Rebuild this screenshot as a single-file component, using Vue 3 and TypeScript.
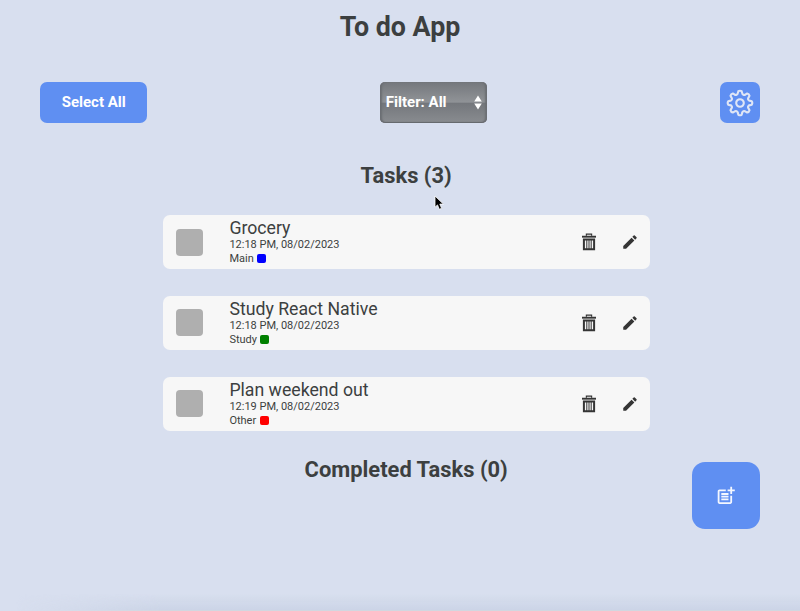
<script setup lang="ts">
interface Task {
  title: string
  date: string
  category: string
  color: string
}

const tasks: Task[] = [
  { title: 'Grocery', date: '12:18 PM, 08/02/2023', category: 'Main', color: '#0000ff' },
  { title: 'Study React Native', date: '12:18 PM, 08/02/2023', category: 'Study', color: '#008000' },
  { title: 'Plan weekend out', date: '12:19 PM, 08/02/2023', category: 'Other', color: '#ff0000' },
]

// Eight rounded teeth joined by scooped valleys
function point(radius: number, degrees: number): string {
  const rad = (degrees * Math.PI) / 180
  return `${(radius * Math.cos(rad)).toFixed(2)} ${(radius * Math.sin(rad)).toFixed(2)}`
}

function gearOutline(): string {
  let d = `M${point(11.9, -8)}`
  for (let i = 0; i < 8; i++) {
    const a = i * 45
    d += `Q${point(12.8, a)} ${point(11.9, a + 8)}`
    d += `L${point(10.3, a + 12)}`
    d += `C${point(8.5, a + 16)} ${point(8.5, a + 29)} ${point(10.3, a + 33)}`
    d += `L${point(11.9, a + 37)}`
  }
  return d + 'Z'
}

const gear = gearOutline()
</script>

<template>
  <main class="app">
    <h1 class="title">To do App</h1>
    <div class="toolbar">
      <button class="btn select-all">Select All</button>
      <button class="btn filter">
        <span>Filter: All</span>
        <svg class="arrows" width="8" height="15" viewBox="0 0 8 15"><path d="M4 .5 7.8 6.5H.2zM4 14.5.2 8.5h7.6z" fill="#fff" /></svg>
      </button>
      <button class="btn settings" aria-label="Settings">
        <svg width="28" height="28" viewBox="-14 -14 28 28" fill="none" stroke="#dfe6f6" stroke-width="2.1" stroke-linejoin="round">
          <path :d="gear" />
          <circle r="3.8" />
        </svg>
      </button>
    </div>

    <div class="lists">
      <h2 class="heading">Tasks (3)</h2>
      <ul class="tasks">
        <li v-for="task in tasks" :key="task.title" class="task">
          <span class="checkbox"></span>
          <div class="info">
            <div class="name">{{ task.title }}</div>
            <div class="date">{{ task.date }}</div>
            <div class="category">
              <span>{{ task.category }}</span>
              <i class="swatch" :style="{ background: task.color }"></i>
            </div>
          </div>
          <svg class="trash" width="16" height="18" viewBox="0 0 16 18" fill="none" stroke="#353535">
            <path d="M5.4 2.8V1.2h5.2v1.6" stroke-width="1.2" />
            <path d="M1 3.7h14" stroke-width="1.9" />
            <path d="M2.9 6.6h10.2v9.6H2.9z" stroke-width="2" />
            <path d="M5.8 6.5v10M8 6.5v10M10.2 6.5v10" stroke-width="1" />
          </svg>
          <svg class="pencil" width="18" height="18" viewBox="0 0 24 24" fill="#353535">
            <path d="M3 17.25V21h3.75L17.81 9.94l-3.75-3.75zM20.71 7.04a1 1 0 0 0 0-1.41l-2.34-2.34a1 1 0 0 0-1.41 0l-1.83 1.83 3.75 3.75z" />
          </svg>
        </li>
      </ul>
      <h2 class="heading completed">Completed Tasks (0)</h2>
    </div>

    <button class="btn add" aria-label="Add task">
      <svg width="21.6" height="21.6" viewBox="0 0 24 24" fill="#f4f7ff">
        <path d="M17 19.22H5V7h7V5H5c-1.1 0-2 .9-2 2v12c0 1.1.9 2 2 2h12c1.1 0 2-.9 2-2v-7h-2zM19 2h-2v3h-3v2h3v3h2V7h3V5h-3zM7 9h8v2H7zM7 12v2h8v-2zM7 15h8v2H7z" />
      </svg>
    </button>
    <svg class="cursor" width="11" height="16" viewBox="0 0 11 16">
      <path d="M1 1v11.2l2.5-2.3 1.8 4.4 2.3-1-1.8-4.2h3.6z" fill="#000" stroke="#fff" stroke-width=".8" />
    </svg>
    <div class="bottom-shade"></div>
  </main>
</template>

<style>
body {
  background: #d8dfef;
}
</style>

<style scoped>
.app {
  position: relative;
  box-sizing: border-box;
  height: 611px;
  overflow: hidden;
  background: #d8dfef;
  color: #3c3f40;
  font-family: Roboto, "Liberation Sans", sans-serif;
}
.title {
  margin: 0;
  padding-top: 11px;
  font-size: 26.8px;
  line-height: 32px;
  text-align: center;
}
.toolbar {
  display: flex;
  padding: 39.3px 40px 0;
}
.btn {
  display: flex;
  align-items: center;
  justify-content: center;
  box-sizing: border-box;
  height: 40.5px;
  padding: 0;
  border: 0;
  border-radius: 7px;
  background: #5f8ff2;
  color: #fff;
  font: 700 15px/20px Roboto, "Liberation Sans", sans-serif;
}
.select-all {
  width: 107.4px;
  margin-right: 232.4px;
  padding-bottom: 1px;
}
.filter {
  justify-content: space-between;
  width: 107.6px;
  padding: 0 5px 1px 6px;
  border-radius: 5px;
  background: linear-gradient(#74777c, #909397 49%, #74777c 52%, #898c90);
  box-shadow: inset 3px 0 2px -1px #6b6e73, inset -3px 0 2px -1px #6b6e73, inset 0 -1px 1px #65676b;
}
.arrows {
  display: block;
}
.settings {
  width: 40.5px;
  margin-left: auto;
}
.lists {
  width: 487px;
  margin: 37.4px 0 0 162.7px;
}
.heading {
  margin: 0;
  font-size: 21.9px;
  line-height: 32px;
  text-align: center;
}
.tasks {
  display: flex;
  flex-direction: column;
  gap: 27px;
  margin: 23px 0 0;
  padding: 0;
  list-style: none;
}
.task {
  display: flex;
  align-items: center;
  box-sizing: border-box;
  height: 53.8px;
  padding: 0 11px 0 13px;
  border-radius: 7px;
  background: #f7f7f7;
}
.checkbox {
  width: 27px;
  height: 27px;
  border-radius: 4px;
  background: #afafaf;
}
.info {
  flex: 1;
  margin-left: 26.7px;
}
.name {
  font-size: 17.7px;
  line-height: 22px;
}
.date {
  font-size: 11px;
  line-height: 11px;
}
.category {
  display: flex;
  align-items: center;
  gap: 3.5px;
  font-size: 11px;
  line-height: 17px;
}
.swatch {
  width: 9px;
  height: 9px;
  border-radius: 2px;
}
.pencil {
  margin-left: 23.5px;
}
.completed {
  margin-top: 23.5px;
}
.add {
  position: absolute;
  right: 40.4px;
  bottom: 82px;
  width: 67.4px;
  height: 67px;
  border-radius: 13px;
}
.cursor {
  position: absolute;
  left: 434px;
  top: 195px;
}
.bottom-shade {
  position: absolute;
  right: 0;
  bottom: 0;
  left: 0;
  height: 16px;
  border-bottom: 1px solid #d2d7e0;
  background: linear-gradient(transparent, #cbd4e6);
  mask-image: linear-gradient(to right, transparent 2%, #000 20%);
}
</style>
